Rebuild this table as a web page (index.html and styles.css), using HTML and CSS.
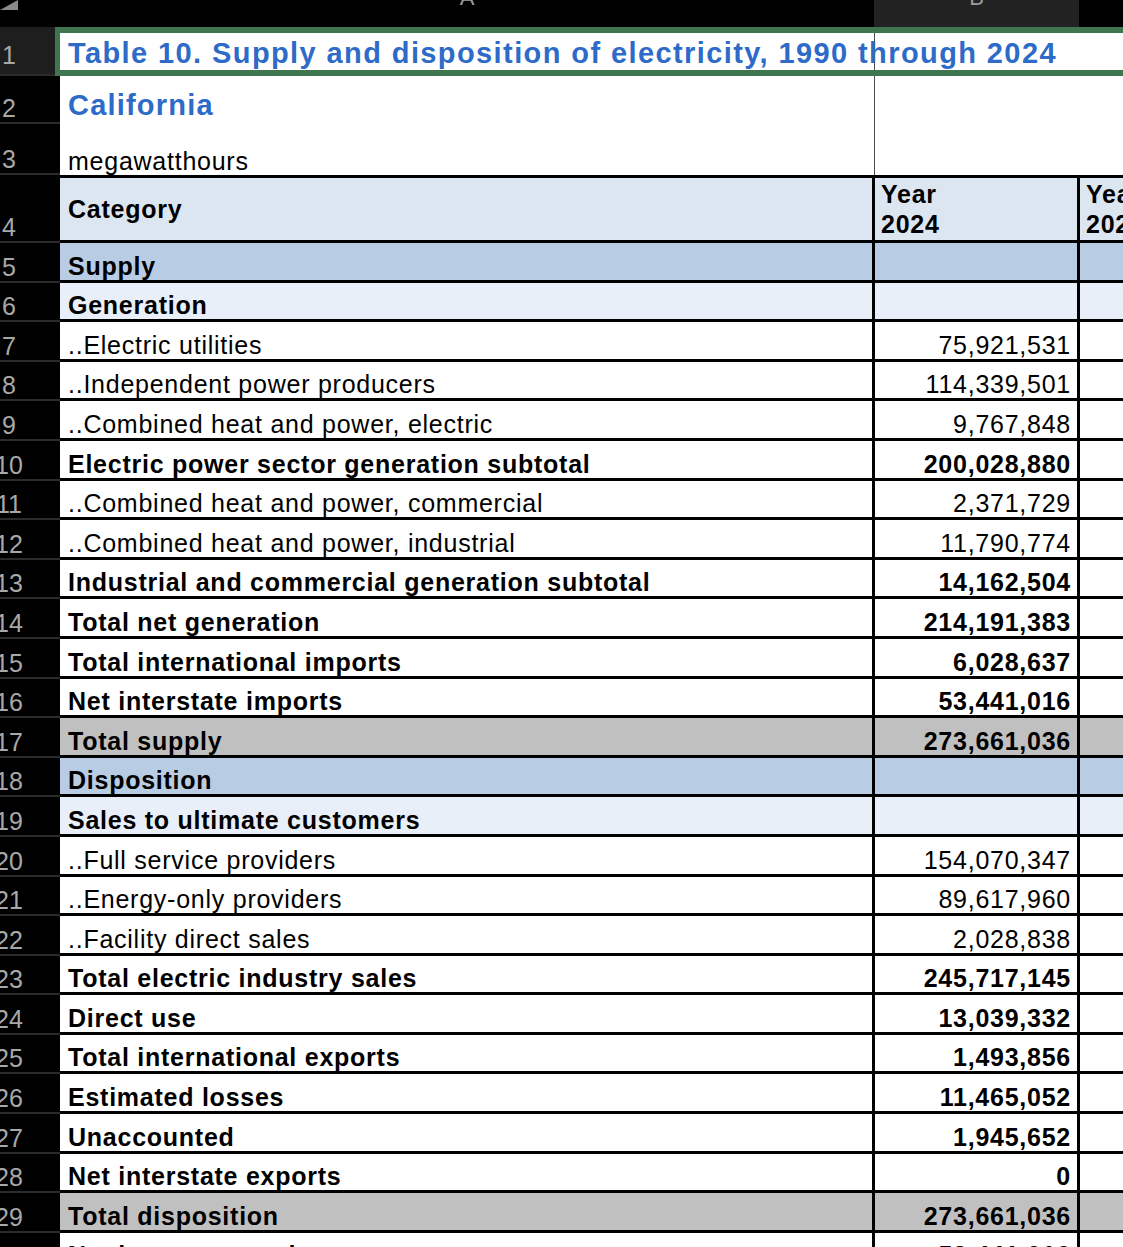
FILE: index.html
```html
<!DOCTYPE html>
<html>
<head>
<meta charset="utf-8">
<link rel="stylesheet" href="styles.css">
</head>
<body>
<div class="sheet">
  <div class="colhead">
    <div class="corner"><svg width="18" height="10" viewBox="0 0 18 10"><polygon points="0,10 18,10 18,0" fill="#8a8a8a"/></svg></div>
    <div class="ch"><span>A</span></div>
    <div class="ch ch-b"><span>B</span></div>
    <div class="ch"><span></span></div>
  </div>

  <div class="row top r1">
    <div class="rn sel-rn"><span>1</span></div>
    <div class="c a title">Table 10. Supply and disposition of electricity, 1990 through 2024</div>
    <div class="c b"></div>
    <div class="c cc"></div>
    <div class="sel"></div>
  </div>
  <div class="row top r2">
    <div class="rn"><span>2</span></div>
    <div class="c a state">California</div>
    <div class="c b"></div>
    <div class="c cc"></div>
  </div>
  <div class="row top r3">
    <div class="rn"><span>3</span></div>
    <div class="c a unit">megawatthours</div>
    <div class="c b"></div>
    <div class="c cc"></div>
  </div>

  <div class="row head">
    <div class="rn"><span>4</span></div>
    <div class="c a">Category</div>
    <div class="c b">Year<br>2024</div>
    <div class="c cc">Year<br>2023</div>
  </div>

  <div class="row data sec bold"><div class="rn"><span>5</span></div><div class="c a">Supply</div><div class="c b"></div><div class="c cc"></div></div>
  <div class="row data sub bold"><div class="rn"><span>6</span></div><div class="c a">Generation</div><div class="c b"></div><div class="c cc"></div></div>
  <div class="row data"><div class="rn"><span>7</span></div><div class="c a">..Electric utilities</div><div class="c b">75,921,531</div><div class="c cc"></div></div>
  <div class="row data"><div class="rn"><span>8</span></div><div class="c a">..Independent power producers</div><div class="c b">114,339,501</div><div class="c cc"></div></div>
  <div class="row data"><div class="rn"><span>9</span></div><div class="c a">..Combined heat and power, electric</div><div class="c b">9,767,848</div><div class="c cc"></div></div>
  <div class="row data bold"><div class="rn"><span>10</span></div><div class="c a">Electric power sector generation subtotal</div><div class="c b">200,028,880</div><div class="c cc"></div></div>
  <div class="row data"><div class="rn"><span>11</span></div><div class="c a">..Combined heat and power, commercial</div><div class="c b">2,371,729</div><div class="c cc"></div></div>
  <div class="row data"><div class="rn"><span>12</span></div><div class="c a">..Combined heat and power, industrial</div><div class="c b">11,790,774</div><div class="c cc"></div></div>
  <div class="row data bold"><div class="rn"><span>13</span></div><div class="c a">Industrial and commercial generation subtotal</div><div class="c b">14,162,504</div><div class="c cc"></div></div>
  <div class="row data bold"><div class="rn"><span>14</span></div><div class="c a">Total net generation</div><div class="c b">214,191,383</div><div class="c cc"></div></div>
  <div class="row data bold"><div class="rn"><span>15</span></div><div class="c a">Total international imports</div><div class="c b">6,028,637</div><div class="c cc"></div></div>
  <div class="row data bold"><div class="rn"><span>16</span></div><div class="c a">Net interstate imports</div><div class="c b">53,441,016</div><div class="c cc"></div></div>
  <div class="row data total bold"><div class="rn"><span>17</span></div><div class="c a">Total supply</div><div class="c b">273,661,036</div><div class="c cc"></div></div>
  <div class="row data sec bold"><div class="rn"><span>18</span></div><div class="c a">Disposition</div><div class="c b"></div><div class="c cc"></div></div>
  <div class="row data sub bold"><div class="rn"><span>19</span></div><div class="c a">Sales to ultimate customers</div><div class="c b"></div><div class="c cc"></div></div>
  <div class="row data"><div class="rn"><span>20</span></div><div class="c a">..Full service providers</div><div class="c b">154,070,347</div><div class="c cc"></div></div>
  <div class="row data"><div class="rn"><span>21</span></div><div class="c a">..Energy-only providers</div><div class="c b">89,617,960</div><div class="c cc"></div></div>
  <div class="row data"><div class="rn"><span>22</span></div><div class="c a">..Facility direct sales</div><div class="c b">2,028,838</div><div class="c cc"></div></div>
  <div class="row data bold"><div class="rn"><span>23</span></div><div class="c a">Total electric industry sales</div><div class="c b">245,717,145</div><div class="c cc"></div></div>
  <div class="row data bold"><div class="rn"><span>24</span></div><div class="c a">Direct use</div><div class="c b">13,039,332</div><div class="c cc"></div></div>
  <div class="row data bold"><div class="rn"><span>25</span></div><div class="c a">Total international exports</div><div class="c b">1,493,856</div><div class="c cc"></div></div>
  <div class="row data bold"><div class="rn"><span>26</span></div><div class="c a">Estimated losses</div><div class="c b">11,465,052</div><div class="c cc"></div></div>
  <div class="row data bold"><div class="rn"><span>27</span></div><div class="c a">Unaccounted</div><div class="c b">1,945,652</div><div class="c cc"></div></div>
  <div class="row data bold"><div class="rn"><span>28</span></div><div class="c a">Net interstate exports</div><div class="c b">0</div><div class="c cc"></div></div>
  <div class="row data total bold"><div class="rn"><span>29</span></div><div class="c a">Total disposition</div><div class="c b">273,661,036</div><div class="c cc"></div></div>
  <div class="row data bold"><div class="rn"><span>30</span></div><div class="c a">Net interstate trade</div><div class="c b">53,441,016</div><div class="c cc"></div></div>
</div>
</body>
</html>
```

FILE: styles.css
```css
html, body {
  margin: 0;
  padding: 0;
  background: #000;
  overflow: hidden;
}
body {
  font-family: "Liberation Sans", Arial, Helvetica, sans-serif;
  color: #000;
}
.sheet {
  width: 1280px;
}
.colhead {
  display: grid;
  grid-template-columns: 60px 814px 205px 201px;
  height: 27px;
  background: #000;
}
.corner {
  display: flex;
  align-items: flex-start;
}
.corner svg {
  display: block;
}
.ch {
  overflow: hidden;
  color: #9c9c9c;
  font-size: 22px;
  text-align: center;
}
.ch span {
  display: block;
  line-height: 20px;
  margin-top: -12px;
}
.ch-b {
  background: #222;
}

.row {
  display: grid;
  grid-template-columns: 60px 815px 205px 200px;
  box-sizing: border-box;
  overflow: hidden;
}
.rn {
  background: #000;
  color: #a8a8a8;
  font-size: 25px;
  line-height: 24px;
  display: flex;
  align-items: flex-end;
  border-bottom: 2px solid #2b2b2b;
  box-sizing: border-box;
}
.rn span {
  width: 18px;
  display: flex;
  justify-content: center;
  white-space: nowrap;
  padding-bottom: 2px;
}
.c {
  box-sizing: border-box;
  white-space: nowrap;
  font-size: 25px;
  letter-spacing: 0.75px;
}

/* top rows (title, state, units) */
.row.top {
  background: #fff;
  position: relative;
}
.row.top .a {
  border-right: 1px solid #4c4c4c;
}
.r1 { height: 49px; }
.r2 { height: 48px; }
.r3 { height: 51px; }
.sel-rn {
  background: #1e1e1e;
}
.sel-rn span {
  padding-bottom: 7px;
}
.title {
  color: #2e6bc9;
  font-weight: bold;
  font-size: 29px;
  line-height: 29px;
  letter-spacing: 1.4px;
  padding: 12px 0 0 8px;
}
.state {
  color: #2e6bc9;
  font-weight: bold;
  font-size: 29px;
  line-height: 29px;
  letter-spacing: 1.2px;
  padding: 15px 0 0 8px;
}
.unit {
  line-height: 25px;
  padding: 25px 0 0 8px;
}
.sel {
  position: absolute;
  left: 55px;
  right: 0;
  top: 0;
  bottom: 0;
  border: 6px solid #3f7650;
  border-left-width: 5px;
  border-right: none;
}

/* header row */
.row.head {
  height: 68px;
  background: #dce6f1;
  border-top: 3px solid #000;
}
.row.head .rn {
  margin-top: -3px;
  height: 68px;
}
.row.head .c {
  font-weight: bold;
  border-bottom: 3px solid #000;
  display: flex;
  align-items: center;
  padding-left: 8px;
}
.row.head .a,
.row.head .b {
  border-right: 3px solid #000;
}
.row.head .b,
.row.head .cc {
  line-height: 30px;
  padding-left: 6px;
}

/* data rows */
.row.data {
  height: 39.6px;
  background: #fff;
}
.row.data .c {
  border-bottom: 3px solid #000;
  line-height: 25px;
  display: flex;
  align-items: flex-end;
  padding-bottom: 1px;
}
.row.data .a {
  border-right: 3px solid #000;
  padding-left: 8px;
}
.row.data .b {
  border-right: 3px solid #000;
  justify-content: flex-end;
  padding-right: 6px;
}
.row.sec { background: #b8cce4; }
.row.sub { background: #e9eff8; }
.row.total { background: #c0c0c0; }
.bold .c { font-weight: bold; }
.row .rn { background-clip: padding-box; }
```
